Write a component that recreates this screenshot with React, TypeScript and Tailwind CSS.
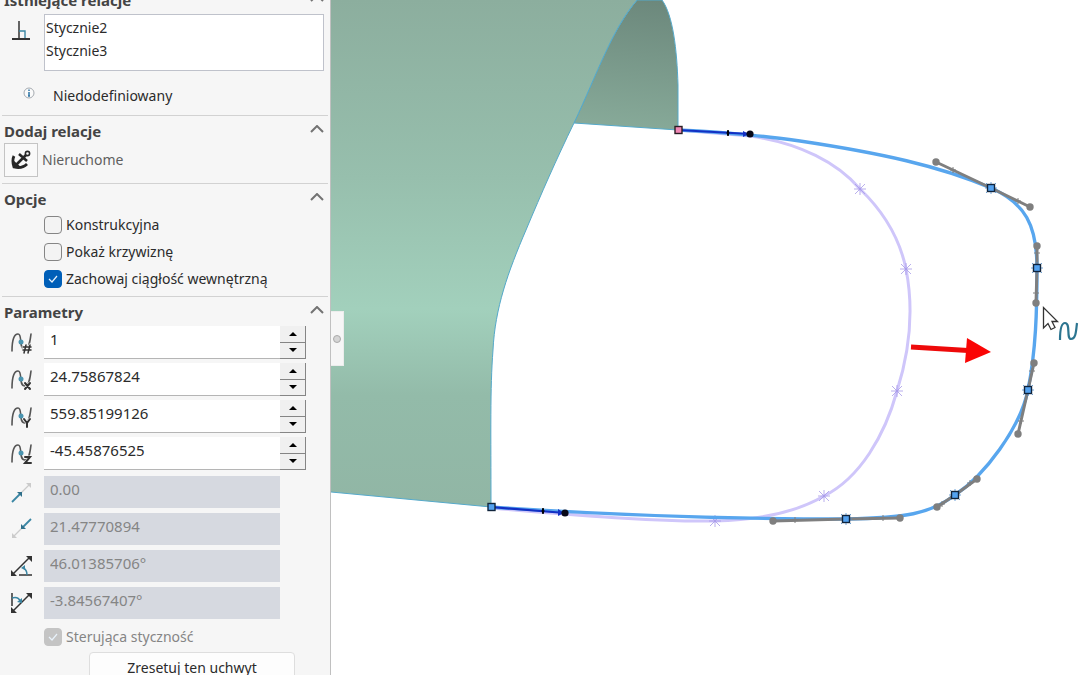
import type { ReactNode } from 'react';

const coordinates = [
  { mark: '#', label: 'Numer punktu', value: '1' },
  { mark: 'X', label: 'Współrzędna X', value: '24.75867824' },
  { mark: 'Y', label: 'Współrzędna Y', value: '559.85199126' },
  { mark: 'Z', label: 'Współrzędna Z', value: '-45.45876525' },
];

const splinePoints = [
  { x: 991, y: 188, ends: [[936, 162], [1030, 207]], ticks: [[953, 170], [1018, 201]] },
  { x: 1037, y: 268, ends: [[1037, 246], [1036, 303]], ticks: [[1037, 253], [1036, 293]] },
  { x: 1028, y: 390, ends: [[1034, 363], [1018, 434]], ticks: [[1032, 371], [1021, 421]] },
  { x: 955, y: 495, ends: [[977, 479], [937, 507]], ticks: [[970, 483], [942, 504]] },
  { x: 846, y: 519, ends: [[773, 521], [900, 518]], ticks: [[795, 520], [883, 518]] },
];

const ghostPoints = [
  [860, 189],
  [906, 269],
  [897, 391],
  [824, 496],
  [715, 521],
];

function MarkPath({ mark }: { mark: string }) {
  if (mark === '#') return <path d="M15 13l-2 8M19 13l-2 8M12 15h8M12 18h8" />;
  if (mark === 'X') return <path d="M14 14l5 6M19 14l-5 6" />;
  if (mark === 'Y') return <path d="M13 13l3 4M19 13l-3 4v4" />;
  return <path d="M14 14h5l-5 6h6" />;
}

function SplineIcon({ mark }: { mark: string }) {
  return (
    <svg viewBox="0 0 22 22" className="w-5.5 h-5.5" fill="none" strokeLinecap="round">
      <path d="M1 19C1 8 3 2 7 2c5 0 0 15 7 15 4 0 5-7 6-15" stroke="#555" strokeWidth="1.6" />
      <circle cx="10" cy="10" r="2.5" fill="#4a94b0" />
      <g stroke="#f6f6f6" strokeWidth="3"><MarkPath mark={mark} /></g>
      <g stroke="#333" strokeWidth={mark === '#' ? 1.5 : 2}><MarkPath mark={mark} /></g>
    </svg>
  );
}

const disabledFields: { label: string; value: string; icon: ReactNode }[] = [
  {
    label: 'Waga styczności 1',
    value: '0.00',
    icon: (
      <>
        <path d="M8 14L19 3" stroke="#cbcbcb" strokeWidth="1.2" />
        <path d="M15 2h5v5z" fill="#cbcbcb" />
        <path d="M1 21l8-8" stroke="#3a86a3" strokeWidth="1.8" />
        <path d="M11 11v5l-5-5z" fill="#2f708b" />
      </>
    ),
  },
  {
    label: 'Waga styczności 2',
    value: '21.47770894',
    icon: (
      <>
        <path d="M2 19L12 9" stroke="#cbcbcb" strokeWidth="1.2" />
        <path d="M1 15v5h5z" fill="#cbcbcb" />
        <path d="M20 1l-8 8" stroke="#3a86a3" strokeWidth="1.8" />
        <path d="M10 11V6l5 5z" fill="#2f708b" />
      </>
    ),
  },
  {
    label: 'Kierunek promieniowy',
    value: '46.01385706°',
    icon: (
      <>
        <path d="M2 19L19 2M8 20h13" stroke="#333" strokeWidth="1.5" />
        <path d="M15 1h6v6zM0 15v6h6z" fill="#333" />
        <path d="M16 20c0-4-1-6-4-7" stroke="#3a86a3" strokeWidth="1.5" />
        <path d="M14 10v5l-4-2z" fill="#3a86a3" />
      </>
    ),
  },
  {
    label: 'Kierunek biegunowy',
    value: '-3.84567407°',
    icon: (
      <>
        <path d="M2 19L19 2M1 1v13" stroke="#333" strokeWidth="1.5" />
        <path d="M15 1h6v6zM0 15v6h6z" fill="#333" />
        <path d="M1 6c4-1 7 0 8 3" stroke="#3a86a3" strokeWidth="1.5" />
        <path d="M11 6v5l-5-1z" fill="#3a86a3" />
      </>
    ),
  },
];

function SectionHeader({ title }: { title: string }) {
  return (
    <div className="flex items-center justify-between h-6 pl-1 pr-1.5">
      <h2 className="font-bold text-[15px] leading-5 text-[#444]">{title}</h2>
      <button aria-label={`Zwiń ${title}`} className="-mt-1">
        <svg viewBox="0 0 14 8" className="w-3.5 h-2" fill="none">
          <path d="M1 7l6-6 6 6" stroke="#737373" strokeWidth="2" />
        </svg>
      </button>
    </div>
  );
}

function Option({ label, checked = false, disabled = false }: { label: string; checked?: boolean; disabled?: boolean }) {
  return (
    <label className={`flex items-center gap-1 h-[27px] pl-11 ${disabled ? 'text-[#858585]' : ''}`}>
      <span className="relative flex">
        <input
          type="checkbox"
          defaultChecked={checked}
          disabled={disabled}
          className="peer appearance-none w-4.5 h-4.5 rounded border border-[#858585] bg-[#f3f3f3] checked:border-[#005fb8] checked:bg-[#005fb8] disabled:border-[#c4c4c4] disabled:bg-[#c4c4c4]"
        />
        <svg
          viewBox="0 0 18 18"
          className="absolute inset-0 w-4.5 h-4.5 pointer-events-none opacity-0 peer-checked:opacity-100"
          fill="none"
        >
          <path d="M5 9l3 3 5-6" stroke="#e8f2fb" strokeWidth="1.2" />
        </svg>
      </span>
      {label}
    </label>
  );
}

function SpinButton({ label, up = false }: { label: string; up?: boolean }) {
  return (
    <button
      aria-label={label}
      className="flex flex-1 items-center justify-center border-r border-b border-[#858585] bg-[#f0f0f0]"
    >
      <svg viewBox="0 0 8 4" className="w-2 h-1">
        <path d={up ? 'M0 4l4-4 4 4z' : 'M0 0h8L4 4z'} fill="#000" />
      </svg>
    </button>
  );
}

function PropertyPanel() {
  return (
    <aside className="w-[331px] shrink-0 h-full overflow-hidden bg-[#f6f6f6] border-r border-[#c0c0c0] text-[#2b2b2b]">
      <section className="-mt-3">
        <SectionHeader title="Istniejące relacje" />
        <div className="flex mt-0.5 pr-1.5">
          <div className="w-11 shrink-0 pl-3 pt-1.5">
            <svg viewBox="0 0 18 20" className="w-4.5 h-5" fill="none">
              <path d="M7 1v18" stroke="#333" strokeWidth="1.5" />
              <path d="M7 11h6v7" stroke="#3a86a3" strokeWidth="1.4" />
              <path d="M0 19h18" stroke="#333" strokeWidth="2" />
            </svg>
          </div>
          <ul className="flex-1 h-[57px] px-px pt-px bg-white border border-[#bfc2cb] leading-[23px]">
            <li>Stycznie2</li>
            <li>Stycznie3</li>
          </ul>
        </div>
        <div className="flex items-start h-9 mt-2 pl-[23px]">
          <svg viewBox="0 0 12 12" className="w-3 h-3 mt-2" fill="none">
            <circle cx="6" cy="6" r="5" fill="#fafafa" stroke="#a5aab0" strokeWidth="1" />
            <path d="M6 5v4M6 2.5v1.4M5 9h2" stroke="#2f75a5" strokeWidth="1.5" />
          </svg>
          <span className="pl-[18px] leading-[34px]">Niedodefiniowany</span>
        </div>
      </section>
      <hr className="mx-0.5 border-[#d2d2d2]" />

      <section className="pt-[3px] pb-1.5">
        <SectionHeader title="Dodaj relacje" />
        <div className="flex items-center gap-1 pl-1 text-[#5f5f5f]">
          <button
            aria-labelledby="fix-relation"
            className="flex items-center justify-center w-[34px] h-[34px] border border-[#c4c4c4] bg-[#f9f9f9]"
          >
            <svg viewBox="0 0 20 20" className="w-5 h-5" fill="none" stroke="#262626">
              <circle cx="16.500" cy="3.500" r="2.100" strokeWidth="1.600" />
              <path d="M15 5L4 16M8 4l8 7" strokeWidth="2.600" />
              <path d="M3 6c-2 4-1 8 0 11 4 1 9 1 13-3" strokeWidth="2.800" />
              <path d="M2 10v8h9z" fill="#262626" stroke="none" />
            </svg>
          </button>
          <span id="fix-relation">Nieruchome</span>
        </div>
      </section>
      <hr className="mx-0.5 border-[#d2d2d2]" />

      <section className="pt-[3px] pb-1">
        <SectionHeader title="Opcje" />
        <Option label="Konstrukcyjna" />
        <Option label="Pokaż krzywiznę" />
        <Option label="Zachowaj ciągłość wewnętrzną" checked />
      </section>
      <hr className="mx-0.5 border-[#d2d2d2]" />

      <section className="pt-[3px]">
        <SectionHeader title="Parametry" />
        <div className="flex flex-col gap-1 mt-0.5">
          {coordinates.map(({ mark, label, value }) => (
            <div key={mark} className="flex items-center h-[33px] pl-[11px] pr-6">
              <div className="w-[33px] shrink-0">
                <SplineIcon mark={mark} />
              </div>
              <input
                type="text"
                aria-label={label}
                defaultValue={value}
                className="flex-1 min-w-0 h-[33px] pl-1.5 pb-1.5 text-[15px] bg-white border-b border-[#b5b5b5] outline-none"
              />
              <div className="flex flex-col w-[26px] h-[33px]">
                <SpinButton label={`${label} w górę`} up />
                <SpinButton label={`${label} w dół`} />
              </div>
            </div>
          ))}
        </div>
        <div className="flex flex-col gap-[5px] mt-1.5">
          {disabledFields.map(({ label, value, icon }) => (
            <div key={label} className="flex items-center h-8 pl-[11px]">
              <div className="w-[33px] shrink-0">
                <svg viewBox="0 0 22 22" className="w-5.5 h-5.5" fill="none">
                  {icon}
                </svg>
              </div>
              <input
                type="text"
                disabled
                aria-label={label}
                defaultValue={value}
                className="w-[236px] h-8 pl-1.5 pb-1.5 text-[15px] bg-[#d6d9e0] text-[#858585]"
              />
            </div>
          ))}
        </div>
        <div className="mt-1">
          <Option label="Sterująca styczność" checked disabled />
        </div>
        <button className="block w-[206px] h-8 mt-0.5 ml-[89px] rounded border border-[#dedede] bg-[#fdfdfd]">
          Zresetuj ten uchwyt
        </button>
      </section>
    </aside>
  );
}

function Star({ x, y, color }: { x: number; y: number; color: string }) {
  return (
    <path
      d={`M${x - 6} ${y}h12M${x} ${y - 6}v12M${x - 5} ${y - 5}l10 10M${x + 5} ${y - 5}l-10 10`}
      stroke={color}
      strokeWidth="0.8"
    />
  );
}

function Viewport() {
  return (
    <main className="relative flex-1 min-w-0 h-full overflow-hidden bg-white">
      <svg viewBox="331 0 749 675" className="block w-full h-full" preserveAspectRatio="xMinYMin slice" fill="none">
        <defs>
          <linearGradient id="outer" x1="331" y1="0" x2="331" y2="507" gradientUnits="userSpaceOnUse">
            <stop offset="0" stopColor="#8cae9e" />
            <stop offset="0.35" stopColor="#97bfad" />
            <stop offset="0.61" stopColor="#a2d0bc" />
            <stop offset="0.78" stopColor="#93bba9" />
            <stop offset="1" stopColor="#91b6a5" />
          </linearGradient>
          <linearGradient id="inner" x1="650" y1="0" x2="635" y2="130" gradientUnits="userSpaceOnUse">
            <stop offset="0" stopColor="#6c887c" />
            <stop offset="1" stopColor="#87aa99" />
          </linearGradient>
        </defs>

        <path
          d="M574 123L678 130V85C677 50 673 15 662 0H637C610 33 598 72 574 123z"
          fill="url(#inner)"
          stroke="#55a9ca"
        />
        <path
          d="M331 0H637C612 29 598 72 574 123C556 160 542 192 526 230C508 272 495 308 493 350C490 390 491 430 491 507L331 492z"
          fill="url(#outer)"
        />
        <path
          d="M637 0C612 29 598 72 574 123C556 160 542 192 526 230C508 272 495 308 493 350C490 390 491 430 491 507L331 492"
          stroke="#55a9ca"
        />

        <path
          d="M678 130L750 136C800 143 838 163 860 189C885 213 900 240 906 269C914 310 910 350 897 391C885 435 860 478 824 496C795 513 760 520 715 521C660 522 600 517 491 508"
          stroke="#cfc6fa"
          strokeWidth="3"
        />
        {ghostPoints.map(([x, y]) => (
          <Star key={x} x={x} y={y} color="#a79be8" />
        ))}

        <path
          d="M678 130C740 133 770 137 800 141C880 153 940 166 991 188C1025 203 1037 225 1037 268C1037 310 1036 350 1028 390C1020 428 985 475 955 495C930 514 905 518 846 519C740 519 620 516 491 507"
          stroke="#58a6ee"
          strokeWidth="3.400"
        />

        {splinePoints.map(({ x, y, ends, ticks }) => (
          <g key={x}>
            <path d={`M${ends[0]}L${x} ${y}L${ends[1]}`} stroke="#7f7f7f" strokeWidth="3" />
            {ends.map(([ex, ey]) => (
              <circle key={ex} cx={ex} cy={ey} r="3.7" fill="#7f7f7f" />
            ))}
            {ticks.map(([tx, ty]) => (
              <path key={tx} d={`M${tx - 3} ${ty}h6M${tx} ${ty - 3}v6`} stroke="#7f7f7f" />
            ))}
            <Star x={x} y={y} color="#4e91d2" />
            <rect x={x - 3.5} y={y - 3.5} width="7" height="7" fill="#53a2f0" stroke="#10243c" strokeWidth="1.4" />
          </g>
        ))}

        <path d="M678 130L750 134M491 507L565 513" stroke="#1230c4" strokeWidth="2.200" />
        <path d="M743 131l6 3-6 3zM558 509l6 4-6 3z" fill="#1230c4" />
        <path d="M728 130l1 3-1 3-1-3zM543 508l1 3-1 3-1-3z" fill="#000" stroke="#000" />
        <circle cx="750" cy="134" r="3.600" fill="#080818" />
        <circle cx="565" cy="513" r="3.600" fill="#080818" />
        <rect x="675" y="126.500" width="7" height="7" fill="#f287b5" stroke="#2b1d24" strokeWidth="1.400" />
        <rect x="488" y="503.500" width="7" height="7" fill="#53a2f0" stroke="#10243c" strokeWidth="1.400" />

        <path d="M911 347L968 350.500" stroke="#ee0a0a" strokeWidth="5" />
        <path d="M967 338L991 352L965 363z" fill="#fa0505" />

        <path
          d="M1043.500 307.500V328L1048 323.500L1051 329.500L1055 327.500L1052 321.500H1057.500z"
          fill="#fff"
          stroke="#333"
          strokeWidth="1.300"
        />
        <path
          d="M1060 340C1060 330 1061 323 1065 323C1071 323 1066 339 1071 339C1076 339 1076 331 1077 323"
          stroke="#2c7590"
          strokeWidth="2.200"
        />
      </svg>
      <button
        aria-label="Zwiń panel"
        className="absolute left-0 top-[311px] flex items-center w-[13px] h-[55px] pl-0.5 bg-[#f6f6f6] border-r border-y border-[#ececec]"
      >
        <span className="w-2 h-2 rounded-full border border-[#aaa] bg-[#d5d5d5]" />
      </button>
    </main>
  );
}

export default function App() {
  return (
    <div className="flex h-screen overflow-hidden font-['Noto_Sans','Open_Sans',sans-serif] text-sm">
      <PropertyPanel />
      <Viewport />
    </div>
  );
}
